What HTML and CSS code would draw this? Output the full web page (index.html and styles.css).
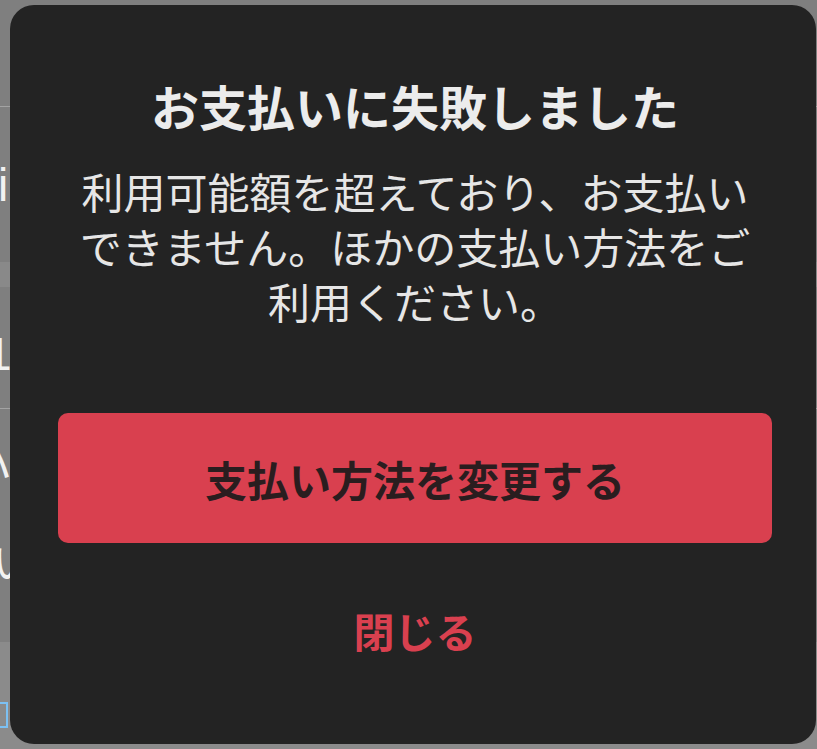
FILE: index.html
```html
<!DOCTYPE html>
<html lang="ja">
<head>
<meta charset="utf-8">
<title>お支払いに失敗しました</title>
<link rel="stylesheet" href="styles.css">
</head>
<body>
<div class="page">
  <div class="row row-top"></div>
  <div class="row row-a"><span class="frag frag-i">i</span></div>
  <div class="band"></div>
  <div class="row row-b"><span class="frag frag-1">1</span></div>
  <div class="row row-c">
    <span class="frag frag-slash">ハ</span>
    <span class="frag frag-u">い</span>
  </div>
  <div class="foot"><span class="blue-box"></span></div>
</div>

<div class="dialog" role="dialog" aria-labelledby="dlg-title">
  <h1 class="dialog-title" id="dlg-title">お支払いに失敗しました</h1>
  <p class="dialog-text">利用可能額を超えており、お支払いできません。ほかの支払い方法をご利用ください。</p>
  <button class="btn-primary" type="button">支払い方法を変更する</button>
  <button class="btn-close" type="button">閉じる</button>
</div>
</body>
</html>
```
FILE: styles.css
```css
* { box-sizing: border-box; }

html, body {
  margin: 0;
  padding: 0;
  background: #7f7f7f;
  font-family: "Noto Sans CJK JP", "Noto Sans", sans-serif;
  overflow: hidden;
}

.page {
  width: 817px;
  height: 749px;
  display: flex;
  flex-direction: column;
}

.row {
  position: relative;
  flex: none;
}

.row-top {
  height: 107px;
  border-bottom: 1px solid #a3a3a3;
}

.row-a {
  height: 155px;
}

.band {
  height: 25px;
  background: #898989;
}

.row-b {
  height: 122px;
  border-bottom: 1px solid #a3a3a3;
}

.row-c {
  height: 233px;
}

.foot {
  flex: 1;
  background: #8b8b8b;
  padding-top: 60px;
}

.frag {
  display: block;
  color: #f2f2f2;
  line-height: 1;
}

.frag-i {
  font-family: "Liberation Sans", sans-serif;
  font-size: 46px;
  margin-left: -2px;
  padding-top: 55px;
}

.frag-1 {
  font-family: "Liberation Sans", sans-serif;
  font-size: 46px;
  margin-left: -14px;
  padding-top: 44px;
}

.frag-slash {
  font-size: 42px;
  margin-left: -30px;
  padding-top: 30px;
}

.frag-u {
  font-size: 42px;
  margin-left: -8px;
  padding-top: 58px;
}

.blue-box {
  display: block;
  width: 8px;
  height: 26px;
  border-top: 2px solid #7cc0f2;
  border-right: 2px solid #7cc0f2;
  border-bottom: 2px solid #7cc0f2;
}

.dialog {
  position: fixed;
  left: 10px;
  top: 5px;
  width: 806px;
  height: 739px;
  border-radius: 24px;
  background: #232323;
  padding: 70px 44px 0 48px;
  display: flex;
  flex-direction: column;
  align-items: center;
  text-align: center;
}

.dialog-title {
  margin: 0;
  font-size: 48px;
  line-height: 60px;
  font-weight: 700;
  color: #ececec;
}

.dialog-text {
  margin: 28px 0 0;
  width: 680px;
  font-size: 42px;
  line-height: 55px;
  font-weight: 400;
  color: #e6e6e6;
}

.btn-primary {
  margin-top: 85px;
  width: 100%;
  height: 130px;
  border: none;
  border-radius: 10px;
  background: #d9404f;
  color: #2a1d1f;
  font-family: inherit;
  font-size: 42px;
  font-weight: 700;
  cursor: pointer;
}

.btn-close {
  margin-top: 59px;
  border: none;
  background: none;
  padding: 0;
  color: #d9404f;
  font-family: inherit;
  font-size: 41px;
  line-height: 56px;
  font-weight: 700;
  cursor: pointer;
}
```
